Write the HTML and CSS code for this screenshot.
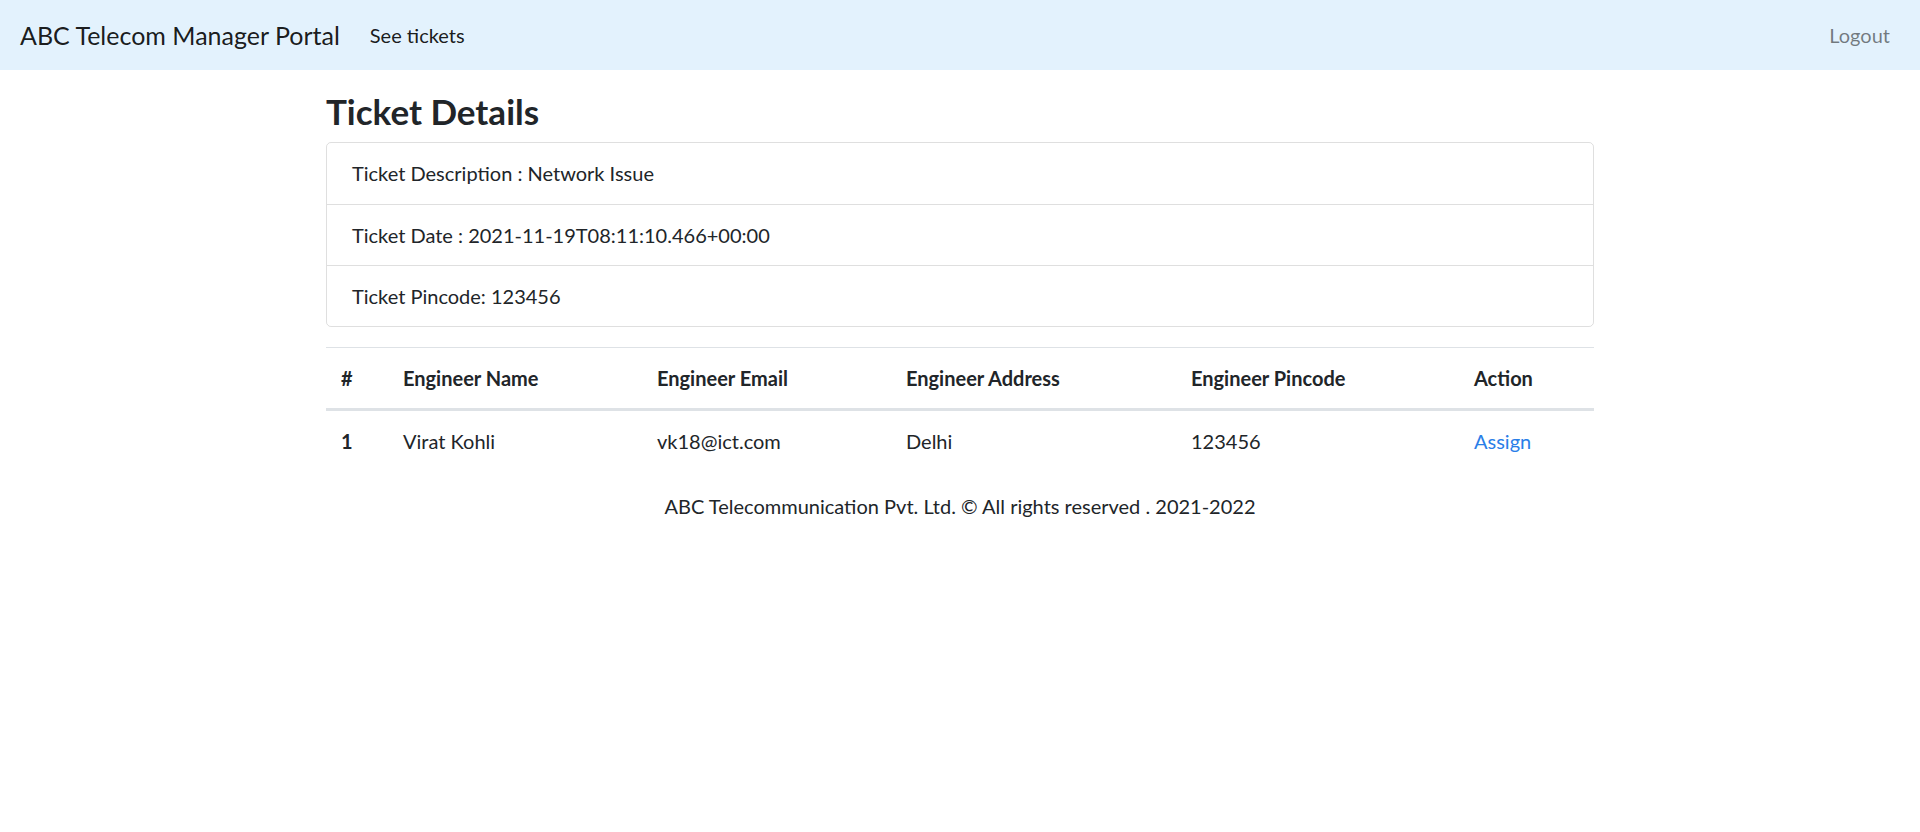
FILE: index.html
```html
<!DOCTYPE html>
<html lang="en">
<head>
<meta charset="utf-8">
<title>ABC Telecom Manager Portal</title>
<link rel="stylesheet" href="styles.css">
</head>
<body>
<nav class="navbar">
  <a class="brand" href="#">ABC Telecom Manager Portal</a>
  <ul class="nav">
    <li><a class="nav-link active" href="#">See tickets</a></li>
  </ul>
  <ul class="nav nav-right">
    <li><a class="nav-link" href="#">Logout</a></li>
  </ul>
</nav>
<main class="container">
  <h3 class="title">Ticket Details</h3>
  <ul class="list-group">
    <li class="list-item">Ticket Description : Network Issue</li>
    <li class="list-item">Ticket Date : 2021-11-19T08:11:10.466+00:00</li>
    <li class="list-item">Ticket Pincode: 123456</li>
  </ul>
  <table class="table">
    <thead>
      <tr>
        <th class="c1">#</th>
        <th class="c2">Engineer Name</th>
        <th class="c3">Engineer Email</th>
        <th class="c4">Engineer Address</th>
        <th class="c5">Engineer Pincode</th>
        <th class="c6">Action</th>
      </tr>
    </thead>
    <tbody>
      <tr>
        <th>1</th>
        <td>Virat Kohli</td>
        <td>vk18@ict.com</td>
        <td>Delhi</td>
        <td>123456</td>
        <td><a class="link" href="#">Assign</a></td>
      </tr>
    </tbody>
  </table>
  <footer class="footer">ABC Telecommunication Pvt. Ltd. © All rights reserved . 2021-2022</footer>
</main>
</body>
</html>
```
FILE: styles.css
```css
*{box-sizing:border-box}
html,body{margin:0;padding:0}
body{
  font-family:Lato,"Noto Sans",sans-serif;
  font-size:20px;
  line-height:30px;
  color:#212529;
  background:#fff;
}
a{text-decoration:none}
.navbar{
  display:flex;
  align-items:center;
  height:70px;
  padding:10px 20px;
  background:#e3f2fd;
}
.brand{
  font-size:25px;
  line-height:37px;
  color:rgba(0,0,0,.9);
  margin-right:20px;
  padding:6px 0;
  white-space:nowrap;
}
.nav{
  list-style:none;
  margin:0;
  padding:0;
  display:flex;
}
.nav-right{margin-left:auto}
.nav-link{
  display:block;
  padding:10px 10px;
  color:rgba(0,0,0,.5);
}
.nav-link.active{color:rgba(0,0,0,.9)}
.container{
  width:1268px;
  margin:0 auto;
  padding-top:20px;
}
.title{
  margin:0 0 10px;
  font-size:35px;
  line-height:42px;
  font-weight:700;
  color:#212529;
}
.list-group{
  list-style:none;
  margin:0;
  padding:0;
  border:1px solid rgba(0,0,0,.125);
  border-radius:5px;
}
.list-item{
  padding:15px 25px;
  height:61px;
}
.list-item + .list-item{border-top:1px solid rgba(0,0,0,.125)}
.table{
  width:100%;
  margin:20px 0 20px;
  border-collapse:collapse;
  table-layout:fixed;
}
.table th,.table td{
  padding:15px;
  text-align:left;
  vertical-align:top;
  border-top:1px solid #dee2e6;
  line-height:30px;
}
.table th{font-weight:700}
.table thead th{border-bottom:3px solid #dee2e6}
.table tbody th,.table tbody td{border-top:none}
.c1{width:62px}
.c2{width:254px}
.c3{width:249px}
.c4{width:285px}
.c5{width:283px}
.c6{width:auto}
.link{color:#2a7ee8}
.footer{
  text-align:center;
  line-height:30px;
}
```
